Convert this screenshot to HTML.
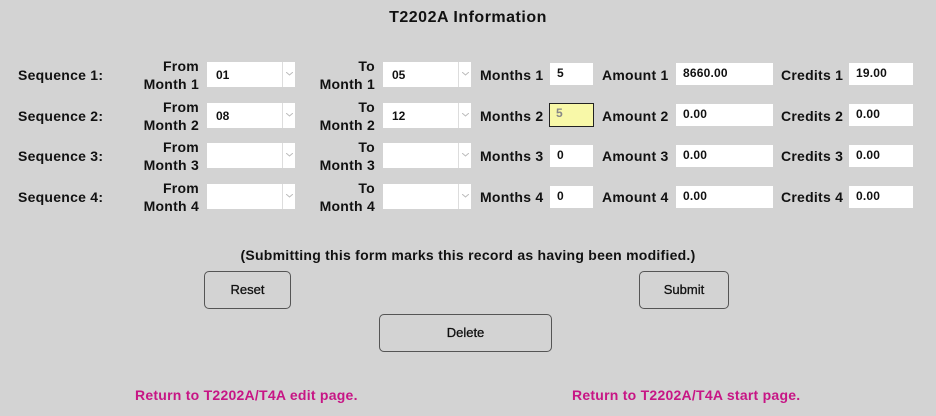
<!DOCTYPE html>
<html><head><style>
body{margin:0;width:936px;height:416px;background:#d3d3d3;font-family:"Liberation Sans",sans-serif;font-weight:bold;font-size:14px;letter-spacing:0.25px;color:#111;position:relative;overflow:hidden}
.a{position:absolute;white-space:nowrap}
.r{text-align:right;line-height:18px}
.sel{position:absolute;background:#fff;width:88px;height:25px;font-size:12px;letter-spacing:0}
.sel span{position:absolute;left:9px;top:6px}
.sel i{position:absolute;left:75px;top:0;width:1px;height:25px;background:#ddd}
.sel svg{position:absolute;left:79px;top:10px}
.in{position:absolute;background:#fff;height:22px;font-size:12px;letter-spacing:0.2px;box-sizing:border-box;padding:3px 0 0 7px}
.btn{position:absolute;border:1px solid #555;border-radius:5px;box-sizing:border-box;text-align:center;font-size:13px;font-weight:normal;-webkit-text-stroke:0.3px #111;letter-spacing:0}
.lk{color:#c71585}
</style></head><body>
<div class="a" style="left:0;width:936px;text-align:center;top:9px;font-size:16px;letter-spacing:0.5px">T2202A Information</div>

<div class="a" style="left:18px;top:67px">Sequence 1:</div>
<div class="a" style="left:18px;top:108px">Sequence 2:</div>
<div class="a" style="left:18px;top:148px">Sequence 3:</div>
<div class="a" style="left:18px;top:189px">Sequence 4:</div>

<div class="a r" style="right:737px;top:57px">From<br>Month 1</div>
<div class="a r" style="right:737px;top:98px">From<br>Month 2</div>
<div class="a r" style="right:737px;top:138px">From<br>Month 3</div>
<div class="a r" style="right:737px;top:179px">From<br>Month 4</div>

<div class="sel" style="left:207px;top:62px"><span>01</span><i></i><svg width="7" height="4"><path d="M0 0L3.5 3L7 0" fill="none" stroke="#bbb"/></svg></div>
<div class="sel" style="left:207px;top:103px"><span>08</span><i></i><svg width="7" height="4"><path d="M0 0L3.5 3L7 0" fill="none" stroke="#bbb"/></svg></div>
<div class="sel" style="left:207px;top:143px"><i></i><svg width="7" height="4"><path d="M0 0L3.5 3L7 0" fill="none" stroke="#bbb"/></svg></div>
<div class="sel" style="left:207px;top:184px"><i></i><svg width="7" height="4"><path d="M0 0L3.5 3L7 0" fill="none" stroke="#bbb"/></svg></div>

<div class="a r" style="right:561px;top:57px">To<br>Month 1</div>
<div class="a r" style="right:561px;top:98px">To<br>Month 2</div>
<div class="a r" style="right:561px;top:138px">To<br>Month 3</div>
<div class="a r" style="right:561px;top:179px">To<br>Month 4</div>

<div class="sel" style="left:383px;top:62px"><span>05</span><i></i><svg width="7" height="4"><path d="M0 0L3.5 3L7 0" fill="none" stroke="#bbb"/></svg></div>
<div class="sel" style="left:383px;top:103px"><span>12</span><i></i><svg width="7" height="4"><path d="M0 0L3.5 3L7 0" fill="none" stroke="#bbb"/></svg></div>
<div class="sel" style="left:383px;top:143px"><i></i><svg width="7" height="4"><path d="M0 0L3.5 3L7 0" fill="none" stroke="#bbb"/></svg></div>
<div class="sel" style="left:383px;top:184px"><i></i><svg width="7" height="4"><path d="M0 0L3.5 3L7 0" fill="none" stroke="#bbb"/></svg></div>

<div class="a" style="left:480px;top:67px">Months 1</div>
<div class="a" style="left:480px;top:108px">Months 2</div>
<div class="a" style="left:480px;top:148px">Months 3</div>
<div class="a" style="left:480px;top:189px">Months 4</div>
<div class="in" style="left:550px;top:63px;width:43px">5</div>
<div class="in" style="left:549px;top:103px;width:45px;height:24px;background:#f8f8a8;border:1px solid #222;color:#888;padding:2px 0 0 6px">5</div>
<div class="in" style="left:550px;top:145px;width:43px">0</div>
<div class="in" style="left:550px;top:186px;width:43px">0</div>

<div class="a" style="left:602px;top:67px">Amount 1</div>
<div class="a" style="left:602px;top:108px">Amount 2</div>
<div class="a" style="left:602px;top:148px">Amount 3</div>
<div class="a" style="left:602px;top:189px">Amount 4</div>
<div class="in" style="left:676px;top:63px;width:97px">8660.00</div>
<div class="in" style="left:676px;top:104px;width:97px">0.00</div>
<div class="in" style="left:676px;top:145px;width:97px">0.00</div>
<div class="in" style="left:676px;top:186px;width:97px">0.00</div>

<div class="a" style="left:781px;top:67px">Credits 1</div>
<div class="a" style="left:781px;top:108px">Credits 2</div>
<div class="a" style="left:781px;top:148px">Credits 3</div>
<div class="a" style="left:781px;top:189px">Credits 4</div>
<div class="in" style="left:849px;top:63px;width:64px">19.00</div>
<div class="in" style="left:849px;top:104px;width:64px">0.00</div>
<div class="in" style="left:849px;top:145px;width:64px">0.00</div>
<div class="in" style="left:849px;top:186px;width:64px">0.00</div>

<div class="a" style="left:0;width:936px;text-align:center;top:247px">(Submitting this form marks this record as having been modified.)</div>

<div class="btn" style="left:204px;top:271px;width:87px;height:38px;line-height:36px">Reset</div>
<div class="btn" style="left:639px;top:271px;width:90px;height:38px;line-height:36px">Submit</div>
<div class="btn" style="left:379px;top:314px;width:173px;height:38px;line-height:36px">Delete</div>

<div class="a lk" style="left:135px;top:387px">Return to T2202A/T4A edit page.</div>
<div class="a lk" style="left:572px;top:387px">Return to T2202A/T4A start page.</div>
</body></html>
